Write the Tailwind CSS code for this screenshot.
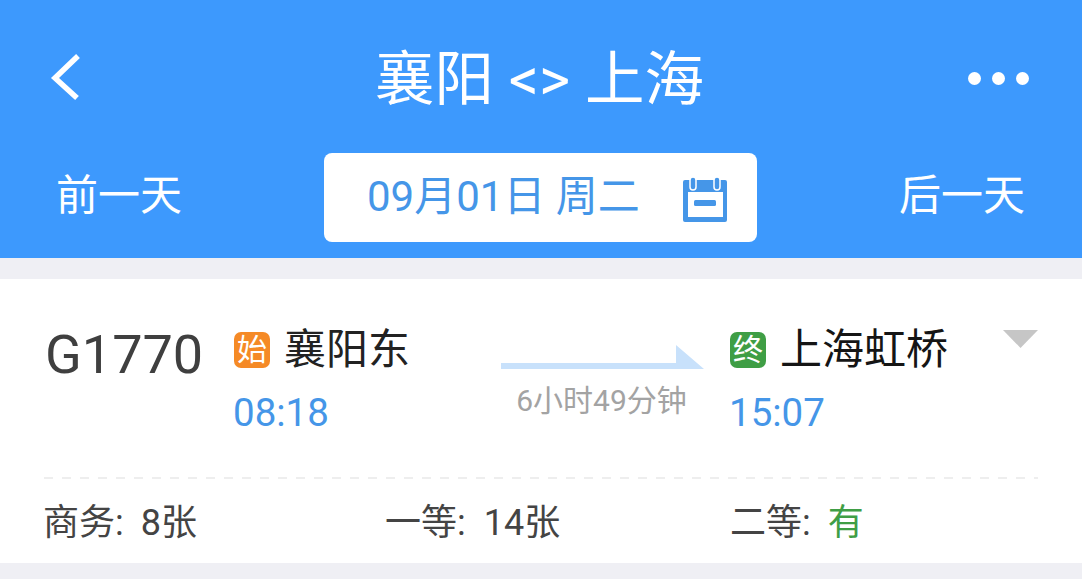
<!DOCTYPE html>
<html lang="zh-CN">

<head>
  <meta charset="UTF-8" />
  <meta name="viewport" content="width=device-width, initial-scale=1.0" />
  <title>襄阳 &lt;&gt; 上海</title>
  <script src="https://cdn.jsdelivr.net/npm/@tailwindcss/browser@4"></script>
</head>

<body class="w-[1082px] h-[579px] overflow-hidden bg-[#efeff4] font-['Roboto','Noto_Sans_CJK_SC',sans-serif]">

  <!-- header -->
  <header class="h-[258px] bg-[#3d99fd] text-white">
    <div class="h-[153px] pl-[50px] pr-[53px] flex items-start">
      <div class="flex-1">
        <svg class="mt-[52px] w-[32px] h-[50px]" viewBox="0 0 32 50" fill="none">
          <path d="M28 4 L5 26 L27 46" stroke="#fff" stroke-width="5.5" stroke-linejoin="miter" />
        </svg>
      </div>
      <h1 class="mt-[42px] text-[59.5px] leading-[76px] font-normal whitespace-nowrap">襄阳 &lt;&gt; 上海</h1>
      <div class="flex-1 mt-[72px] flex justify-end gap-[11px]">
        <span class="w-[13px] h-[13px] rounded-full bg-white"></span>
        <span class="w-[13px] h-[13px] rounded-full bg-white"></span>
        <span class="w-[13px] h-[13px] rounded-full bg-white"></span>
      </div>
    </div>
    <div class="pl-[56px] pr-[57px] flex items-start justify-between">
      <button class="mt-[15px] text-[42px] leading-[56px]">前一天</button>
      <div class="w-[433px] h-[89px] bg-white rounded-[8px] flex items-center pl-[43px] text-[#4596e8]">
        <span class="text-[42px] leading-[56px] whitespace-nowrap w-[315px] -mt-[2px]">09月01日 周二</span>
        <svg class="w-[46px] h-[46px] mt-[3px]" viewBox="0 0 46 46" fill="none">
          <path d="M3 4 H43 Q45 4 45 6 V44 Q45 46 43 46 H3 Q1 46 1 44 V6 Q1 4 3 4 Z M6 16 V41 H41 V16 Z" fill="#4596e8" fill-rule="evenodd" />
          <rect x="8" y="1" width="6" height="13" rx="3" fill="#4596e8" stroke="#fff" stroke-width="1.5" />
          <rect x="32" y="1" width="6" height="13" rx="3" fill="#4596e8" stroke="#fff" stroke-width="1.5" />
          <rect x="12" y="24" width="22" height="6" rx="1.5" fill="#4596e8" />
        </svg>
      </div>
      <button class="mt-[15px] text-[42px] leading-[56px]">后一天</button>
    </div>
  </header>

  <!-- train card -->
  <section class="mt-[21px] h-[284px] bg-white pl-[44px] pr-[44px]">
    <div class="h-[198px] flex items-start">
      <div class="w-[190px] pl-[1px] pt-[46px] text-[54px] leading-[60px] text-[#3f3f3f]">G1770</div>

      <div class="w-[267px] pt-[43px]">
        <div class="flex items-center h-[56px]">
          <span class="w-[36px] h-[36px] rounded-[7px] bg-[#f58a26] text-white text-[30px] leading-[36px] text-center">始</span>
          <span class="ml-[14px] text-[42px] leading-[56px] text-[#222]">襄阳东</span>
        </div>
        <div class="mt-[10px] -ml-[1px] text-[38.5px] leading-[50px] text-[#4596e8]">08:18</div>
      </div>

      <div class="w-[229px] pt-[65px]">
        <svg class="block w-[203px] h-[26px]" viewBox="0 0 203 26">
          <path d="M0 19 H175 V1 L203 25 H0 Z" fill="#c8e1fb" />
        </svg>
        <div class="mt-[11px] -ml-[1px] w-[203px] text-center text-[30px] leading-[40px] text-[#a3a3a3] whitespace-nowrap">6小时49分钟</div>
      </div>

      <div class="flex-1 pt-[43px]">
        <div class="flex items-center h-[56px]">
          <span class="w-[36px] h-[36px] rounded-[7px] bg-[#3f9e45] text-white text-[30px] leading-[36px] text-center">终</span>
          <span class="ml-[14px] text-[42px] leading-[56px] text-[#151515]">上海虹桥</span>
        </div>
        <div class="mt-[10px] -ml-[1px] text-[38.5px] leading-[50px] text-[#4596e8]">15:07</div>
      </div>

      <div class="pt-[51px]">
        <div class="w-[35px] h-[18px] bg-[#c6c6c6] [clip-path:polygon(0_0,100%_0,50%_100%)]"></div>
      </div>
    </div>

    <div class="h-[2px] bg-[repeating-linear-gradient(90deg,#eeeeee_0_9px,transparent_9px_18px)]"></div>

    <div class="mt-[19px] -ml-[1px] flex text-[36px] leading-[50px] text-[#444]">
      <div class="w-[342px]">商务:<span class="ml-[17px]">8张</span></div>
      <div class="w-[345px]">一等:<span class="ml-[18px]">14张</span></div>
      <div>二等:<span class="ml-[17px] text-[#3f9e45]">有</span></div>
    </div>
  </section>

</body>

</html>
